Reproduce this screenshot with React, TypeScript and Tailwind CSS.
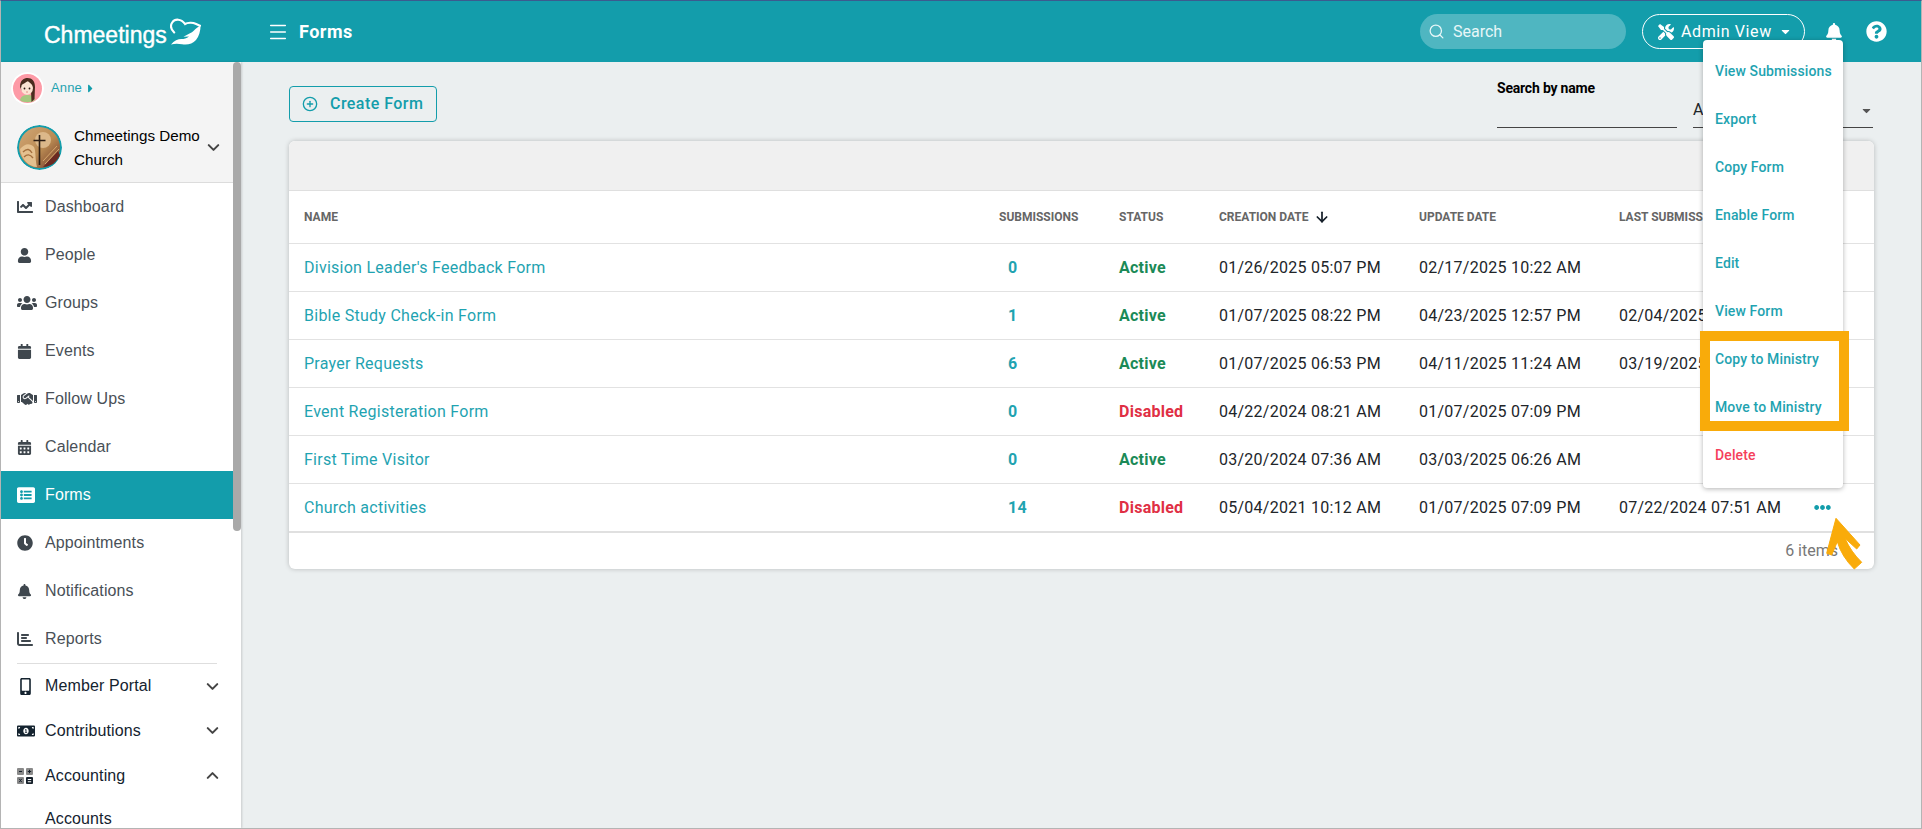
import type { ReactNode } from 'react'
import { ChevronDown, ChevronUp, CirclePlus, Menu, Search, ArrowDown } from 'lucide-react'
import {
  FaBell,
  FaCalendar,
  FaCalendarAlt,
  FaCaretDown,
  FaCaretRight,
  FaChartLine,
  FaClock,
  FaEllipsisH,
  FaListAlt,
  FaMobileAlt,
  FaMoneyBillAlt,
  FaQuestionCircle,
  FaTools,
  FaUser,
  FaUsers,
} from 'react-icons/fa'
import { FaChartBar, FaHandshake } from 'react-icons/fa6'

const roboto = 'font-["Roboto",sans-serif]'
const rowGrid = 'grid grid-cols-[695px_120px_100px_200px_200px_195px_1fr] items-center'

const navItems: { label: string; icon: ReactNode; active?: boolean }[] = [
  { label: 'Dashboard', icon: <FaChartLine size={16} /> },
  { label: 'People', icon: <FaUser size={15} /> },
  { label: 'Groups', icon: <FaUsers size={20} /> },
  { label: 'Events', icon: <FaCalendar size={15} /> },
  { label: 'Follow Ups', icon: <FaHandshake size={20} /> },
  { label: 'Calendar', icon: <FaCalendarAlt size={15} /> },
  { label: 'Forms', icon: <FaListAlt size={18} />, active: true },
  { label: 'Appointments', icon: <FaClock size={16} /> },
  { label: 'Notifications', icon: <FaBell size={15} /> },
  { label: 'Reports', icon: <FaChartBar size={16} /> },
]

const forms = [
  { name: "Division Leader's Feedback Form", subs: 0, status: 'Active', created: '01/26/2025 05:07 PM', updated: '02/17/2025 10:22 AM', last: '' },
  { name: 'Bible Study Check-in Form', subs: 1, status: 'Active', created: '01/07/2025 08:22 PM', updated: '04/23/2025 12:57 PM', last: '02/04/2025' },
  { name: 'Prayer Requests', subs: 6, status: 'Active', created: '01/07/2025 06:53 PM', updated: '04/11/2025 11:24 AM', last: '03/19/2025' },
  { name: 'Event Registeration Form', subs: 0, status: 'Disabled', created: '04/22/2024 08:21 AM', updated: '01/07/2025 07:09 PM', last: '' },
  { name: 'First Time Visitor', subs: 0, status: 'Active', created: '03/20/2024 07:36 AM', updated: '03/03/2025 06:26 AM', last: '' },
  { name: 'Church activities', subs: 14, status: 'Disabled', created: '05/04/2021 10:12 AM', updated: '01/07/2025 07:09 PM', last: '07/22/2024 07:51 AM' },
]

const menuItems = ['View Submissions', 'Export', 'Copy Form', 'Enable Form', 'Edit', 'View Form', 'Copy to Ministry', 'Move to Ministry']

function LogoHeart() {
  return (
    <svg width="32" height="30" viewBox="0 0 32 30" className="ml-[3px] shrink-0">
      <path d="M4.2 15.5 C1.2 12.5 0.2 8.5 2.2 5.5 C5 1.5 11 1.5 15 7 C17.5 5.5 23 5.5 25 6.5 L30 8.7" fill="none" stroke="#fff" strokeWidth="2.1" strokeLinecap="round" />
      <path d="M1 27.5 C4 23.5 8 22 11.5 22 C14 22 16.5 21.5 19 19.5 L13.5 19.8 C18 17 21.5 16 24 13.5 C26 11.5 28 10 30.6 8.6 C30.5 14 29 19.5 26 23 C22.5 27 17 28.3 12 27.2 C8 26.5 4.5 26.5 1 27.5 Z" fill="#fff" />
    </svg>
  )
}

function AnneAvatar() {
  return (
    <svg width="33" height="33" viewBox="0 0 33 33" className="rounded-full">
      <circle cx="16.5" cy="16.5" r="16.5" fill="#fff" />
      <circle cx="16.5" cy="16.5" r="14.5" fill="#fd9aa6" />
      <path d="M9 28 C10 24 13 23 16.5 23 C20 23 23 24 24 28 C21 31 12 31 9 28 Z" fill="#a5c77f" />
      <path d="M9 15 C9 8 13 6 16.5 6 C21 6 24 9 24 15 L23.5 27 L20.5 30 L20 19 L11 19 Z" fill="#4a2c1e" />
      <ellipse cx="16" cy="16" rx="6" ry="6.8" fill="#fbe3d2" />
      <path d="M10 13 C12 12 15 11 17 8.5 C18.5 11 21 12 22 14 L22 9 L12 8 Z" fill="#4a2c1e" />
      <circle cx="13.5" cy="16.5" r="0.9" fill="#2b1a12" />
      <circle cx="18.5" cy="16.5" r="0.9" fill="#2b1a12" />
      <path d="M15 20 H17" stroke="#d9786f" strokeWidth="0.8" />
    </svg>
  )
}

function ChurchAvatar() {
  return (
    <svg width="45" height="45" viewBox="0 0 45 45" className="rounded-full shrink-0">
      <defs>
        <linearGradient id="church" x1="0" y1="0" x2="1" y2="1">
          <stop offset="0" stopColor="#d2a777" />
          <stop offset="0.55" stopColor="#b98a52" />
          <stop offset="1" stopColor="#6d3526" />
        </linearGradient>
      </defs>
      <circle cx="22.5" cy="22.5" r="22.5" fill="#139dab" />
      <circle cx="22.5" cy="22.5" r="20.5" fill="url(#church)" />
      <path d="M3 24 C8 18 13 18 17 22 C19 26 18 34 20 42 C12 42 4 34 3 24 Z" fill="#e4c08f" />
      <path d="M6 27 C10 23 13 24 15 28 M7 32 C10 29 13 29 16 33" stroke="#a36f3e" strokeWidth="1.4" fill="none" />
      <path d="M26 42 L41 26 L43 30 C40 37 34 42 26 42 Z" fill="#6b2a22" />
      <path d="M26 36 L40 21 M28 39 L42 24" stroke="#d6a76b" strokeWidth="1" />
      <circle cx="26" cy="15" r="8" fill="#dcb88a" />
      <path d="M22.5 10 V40 M16.5 15.5 H28.5" stroke="#2a1c14" strokeWidth="1.6" />
    </svg>
  )
}

function CalculatorIcon() {
  return (
    <svg width="16" height="16" viewBox="0 0 16 16">
      <rect x="0" y="0" width="7" height="7" rx="1" fill="#8a8a8a" />
      <rect x="9" y="0" width="7" height="7" rx="1" fill="#8a8a8a" />
      <rect x="0" y="9" width="7" height="7" rx="1" fill="#8a8a8a" />
      <rect x="9" y="9" width="7" height="7" rx="1" fill="#16202a" />
      <path d="M2 3.5 H5 M10.8 3.5 H14.2 M12.5 1.8 V5.2 M2.2 10.8 L4.8 14.2 M4.8 10.8 L2.2 14.2" stroke="#16202a" strokeWidth="1" />
      <path d="M10.8 11.5 H14.2 M10.8 13.7 H14.2" stroke="#fff" strokeWidth="1.1" />
    </svg>
  )
}

function Sidebar() {
  return (
    <aside className='relative w-[240px] shrink-0 h-full overflow-hidden bg-white font-["Liberation_Sans",sans-serif] text-[16px] tracking-[0.12px] shadow-[1px_0_2px_rgba(0,0,0,0.15)]'>
      <div className="h-[121px] bg-[#f4f4f4] border-b border-[#dcdcdc]">
        <div className="flex items-center pl-[10px] h-[52px] gap-[7px]">
          <AnneAvatar />
          <span className="text-[13px] text-[#1fa3b1]">Anne</span>
          <FaCaretRight size={13} className="text-[#139dab] -ml-[5px]" />
        </div>
        <div className="flex items-center pl-[16px] mt-[8px]">
          <ChurchAvatar />
          <div className="w-[133px] ml-[12px] pt-[2px] text-[15.2px] tracking-normal leading-[24px] text-black">Chmeetings Demo Church</div>
          <ChevronDown size={19} strokeWidth={2.6} className="text-[#444] -ml-[3px]" />
        </div>
      </div>
      <nav>
        {navItems.map((item) => (
          <div
            key={item.label}
            className={`flex items-center h-[48px] pl-[16px] ${item.active ? 'bg-[#139dab] text-white' : 'text-[#495057]'}`}
          >
            <span className={`w-[28px] flex items-center ${item.active ? 'text-white' : 'text-[#3f474e]'}`}>{item.icon}</span>
            {item.label}
          </div>
        ))}
        <div className="h-px bg-[#dedede] mx-[16px] w-[200px]" />
        <div className="flex items-center h-[44px] pl-[16px] pr-[19px] text-[#14232f]">
          <span className="w-[28px] flex items-center"><FaMobileAlt size={17} /></span>
          Member Portal
          <ChevronDown size={19} strokeWidth={2.6} className="ml-auto text-[#444]" />
        </div>
        <div className="flex items-center h-[45px] pl-[16px] pr-[19px] text-[#14232f]">
          <span className="w-[28px] flex items-center"><FaMoneyBillAlt size={18} /></span>
          Contributions
          <ChevronDown size={19} strokeWidth={2.6} className="ml-auto text-[#444]" />
        </div>
        <div className="flex items-center h-[45px] pl-[16px] pr-[19px] text-[#14232f]">
          <span className="w-[28px] flex items-center"><CalculatorIcon /></span>
          Accounting
          <ChevronUp size={19} strokeWidth={2.6} className="ml-auto text-[#444]" />
        </div>
        <div className="flex items-center h-[42px] pl-[44px] text-[#14232f]">Accounts</div>
      </nav>
      {/* scrollbar thumb */}
      <div className="absolute right-0 top-0 w-[8px] h-[469px] bg-[#a9a9a9] rounded-[4px]" />
    </aside>
  )
}

function FormsTable() {
  return (
    <div className={`rounded-[6px] bg-white shadow-[0_0_5px_rgba(0,0,0,0.22)] overflow-hidden ${roboto}`}>
      <div className="h-[50px] bg-[#f0f0f0] border-b border-[#dfdfdf]" />
      <div className={`${rowGrid} h-[52px] pl-[15px] text-[12px] font-bold text-[#666] uppercase`}>
        <span>Name</span>
        <span>Submissions</span>
        <span>Status</span>
        <span className="flex items-center gap-[5px]">Creation Date <ArrowDown size={16} strokeWidth={2.6} className="text-[#16202a]" /></span>
        <span>Update Date</span>
        <span>Last Submission</span>
      </div>
      {forms.map((form, i) => (
        <div key={form.name} className={`${rowGrid} h-[48px] pl-[15px] text-[16px] tracking-[0.26px] text-[#212529] border-t border-[#e2e2e2]`}>
          <span className="text-[#1fa3b1]">{form.name}</span>
          <span className="pl-[9px] font-bold text-[#1fa3b1]">{form.subs}</span>
          <span className={`font-bold ${form.status === 'Active' ? 'text-[#1b8a57]' : 'text-[#e02f44]'}`}>{form.status}</span>
          <span>{form.created}</span>
          <span>{form.updated}</span>
          <span>{form.last}</span>
          {i === forms.length - 1 && <FaEllipsisH size={17} className="text-[#139dab]" />}
        </div>
      ))}
      <div className="h-[38px] border-t-2 border-[#e0e0e0] flex items-center justify-end pr-[36px] text-[16px] text-[#777]">
        6 items
      </div>
    </div>
  )
}

export default function App() {
  return (
    <div className="relative w-full h-[829px] overflow-hidden flex flex-col border border-[#b4b4b4] border-t-[#3b5b8f] bg-[#ebeff0]">
      <header className="h-[61px] shrink-0 bg-[#139dab] flex items-center text-white">
        <div className="w-[240px] pl-[43px] flex items-center">
          <span className='font-["Liberation_Sans",sans-serif] text-[23px] leading-[30px] mt-[7px] [-webkit-text-stroke:0.4px_white]'>Chmeetings</span>
          <LogoHeart />
        </div>
        <Menu size={22} strokeWidth={1.6} className="ml-[26px]" />
        <span className={`${roboto} ml-[10px] text-[18px] font-bold tracking-[0.5px]`}>Forms</span>
        <div className={`ml-auto w-[206px] h-[35px] rounded-full bg-[#4fb6c1] flex items-center pl-[8px] gap-[8px] ${roboto} text-[16px] text-[#e8f7f8]`}>
          <Search size={17} strokeWidth={1.8} />
          Search
        </div>
        <div className={`ml-[16px] w-[163px] h-[35px] rounded-full border border-white flex items-center pl-[15px] gap-[7px] ${roboto} text-[16px] tracking-[0.6px]`}>
          <FaTools size={16} />
          Admin View
          <FaCaretDown size={13} />
        </div>
        <FaBell size={18} className="ml-[20px]" />
        <FaQuestionCircle size={21} className="ml-[23px] mr-[34px]" />
      </header>
      <div className="flex-1 flex min-h-0">
        <Sidebar />
        <main className={`flex-1 min-w-0 pl-[48px] pr-[47px] pt-[24px] ${roboto}`}>
          <div className="flex justify-between h-[55px]">
            <button className="w-[148px] h-[36px] rounded-[4px] border border-[#139dab] flex items-center pl-[12px] gap-[12px] text-[16px] font-medium tracking-[0.45px] text-[#139dab]">
              <CirclePlus size={16} />
              Create Form
            </button>
            <div className="flex gap-[16px] mr-[1px]">
              <div className="w-[180px] h-[42px] border-b border-[#444]">
                <div className="text-[14px] font-bold tracking-[-0.2px] text-black leading-[4px]">Search by name</div>
              </div>
              <div className="w-[180px] h-[42px] border-b border-[#444] flex items-center justify-between text-[16px] text-[#212529] pt-[7px]">
                <span>All</span>
                <FaCaretDown size={13} className="text-[#555]" />
              </div>
            </div>
          </div>
          <FormsTable />
        </main>
      </div>

      {/* row action menu */}
      <div className={`absolute left-[1702px] top-[39px] w-[140px] h-[448px] bg-white rounded-[4px] py-[7px] shadow-[0_1px_5px_rgba(0,0,0,0.3)] ${roboto} text-[14px] font-medium tracking-[0.12px]`}>
        {menuItems.map((label) => (
          <div key={label} className="h-[48px] flex items-center pl-[12px] text-[#1fa3b1]">{label}</div>
        ))}
        <div className="h-[48px] flex items-center pl-[12px] text-[#f5405b]">Delete</div>
      </div>

      {/* annotation */}
      <div className="absolute left-[1699px] top-[330px] w-[149px] h-[100px] border-[10px] border-[#f9ab0a]" />
      <svg width="40" height="60" viewBox="0 0 40 60" className="absolute left-[1823px] top-[513px]">
        <path d="M12 4.3 L36 31 L32.7 35 L21 24.3 Q27 38 37.7 48.3 L30.3 55 Q17.7 42.7 13.3 27.7 L7.7 41 L2.7 39.3 Z" fill="#f9ab0a" stroke="#f9ab0a" strokeWidth="1" strokeLinejoin="round" />
      </svg>
    </div>
  )
}
